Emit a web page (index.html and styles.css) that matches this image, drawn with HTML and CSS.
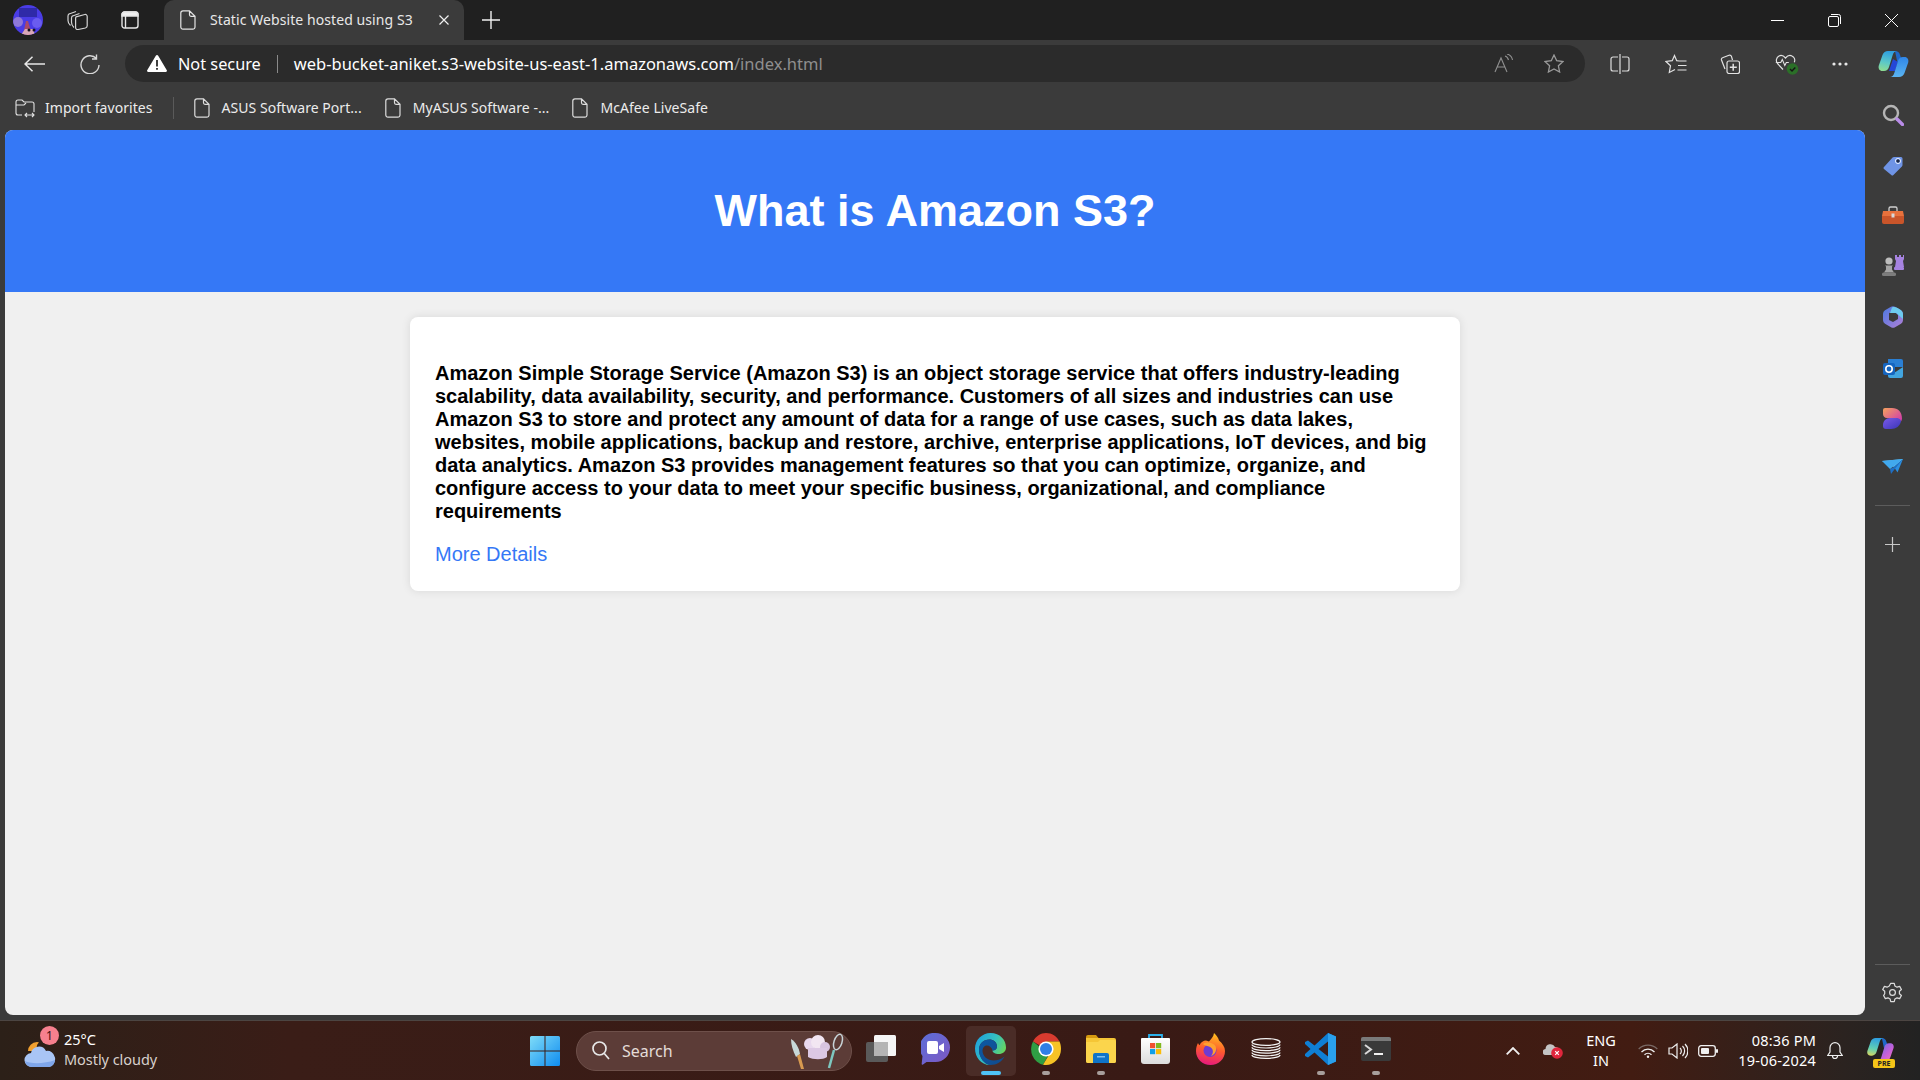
FILE: index.html
```html
<!DOCTYPE html>
<html lang="en">
  <head>
    <meta charset="UTF-8" />
    <meta name="viewport" content="width=device-width, initial-scale=1.0" />
    <title>Static Website hosted using S3</title>
    <link rel="stylesheet" href="styles.css">
  </head>
  <body>
    <!-- title bar -->
    <div class="titlebar">
      <svg class="avatar" width="30" height="30" viewBox="0 0 30 30">
        <defs><clipPath id="avClip"><circle cx="15" cy="15" r="15"/></clipPath></defs>
        <g clip-path="url(#avClip)">
          <rect width="30" height="30" fill="#4a3ce6"/>
          <rect x="6" y="3" width="18" height="9" fill="#2f2aa8"/>
          <circle cx="5" cy="17" r="5" fill="#8f78d8"/>
          <circle cx="24" cy="18" r="5" fill="#6a5cf0"/>
          <path d="M10 30l3-14 2 0 4 14z" fill="#a84a6a"/>
          <path d="M8 30l4-6h8l2 6z" fill="#d8a8b8"/>
          <circle cx="16" cy="25" r="1.5" fill="#15121f"/>
          <circle cx="21" cy="25" r="1.5" fill="#15121f"/>
        </g>
      </svg>
      <svg class="ws-icon" width="21" height="20" viewBox="0 0 21 20" fill="none" stroke="#d4d4d4" stroke-width="1.2">
        <path d="M3.5 15.5C1.8 14 1 12.5 1 10.5V6c0-1.2.7-2 1.800-2.300L9 1.500"/>
        <path d="M7 17.500C5.300 16 4.500 14.500 4.500 12.500V8c0-1.200.7-2 1.800-2.300L12.500 3.500"/>
        <path d="M9 6.800l8.800-2.300c1.300-.3 2.400.6 2.400 2v9.200c0 1.200-.7 2-1.800 2.300L11 19.500c-1.300.3-2.400-.6-2.400-2V8.500c0-.8.100-1.400.400-1.700z"/>
      </svg>
      <svg class="vt-icon" width="18" height="18" viewBox="0 0 18 18" fill="none" stroke="#e6e6e6" stroke-width="1.4">
        <path d="M1 5V3.500A2.500 2.500 0 0 1 3.500 1h11A2.500 2.500 0 0 1 17 3.500V5z" fill="#f0f0f0"/>
        <rect x="1" y="1" width="16" height="16" rx="2.5"/>
        <path d="M4.500 5v12" />
      </svg>
      <div class="tab">
        <svg width="16" height="20" viewBox="0 0 16 20" fill="none" stroke="#e4e4e4" stroke-width="1.2"><path d="M3 .8h6.500L15 6.300V17a2.200 2.200 0 0 1-2.200 2.200H3A2.200 2.200 0 0 1 .8 17V3A2.200 2.200 0 0 1 3 .8zM9.500.8v4a1.500 1.500 0 0 0 1.500 1.500h4"/></svg>
        <span class="tab-title">Static Website hosted using S3</span>
        <svg class="tab-close" width="10" height="10" viewBox="0 0 10 10" stroke="#f0f0f0" stroke-width="1.2"><path d="M.5.5l9 9M9.5.5l-9 9"/></svg>
      </div>
      <svg class="new-tab" width="18" height="18" viewBox="0 0 18 18" stroke="#f0f0f0" stroke-width="1.4"><path d="M9 0v18M0 9h18"/></svg>
      <div class="win-controls">
        <svg width="13" height="13" viewBox="0 0 13 13" stroke="#ffffff"><path d="M0 6.500h13"/></svg>
        <svg width="13" height="13" viewBox="0 0 13 13" fill="none" stroke="#ffffff"><rect x=".5" y="2.5" width="10" height="10" rx="1.5"/><path d="M3 .5h7.500a2 2 0 0 1 2 2V10"/></svg>
        <svg width="13" height="13" viewBox="0 0 13 13" stroke="#ffffff"><path d="M0 0l13 13M13 0L0 13"/></svg>
      </div>
    </div>

    <!-- address bar row -->
    <div class="toolbar">
      <svg class="back" width="21" height="16" viewBox="0 0 21 16" fill="none" stroke="#e8e8e8" stroke-width="1.5"><path d="M21 8H1M8.500.7L1 8l7.500 7.300"/></svg>
      <svg class="reload" width="20" height="20" viewBox="0 0 20 20" fill="none" stroke="#d8d8d8" stroke-width="1.4"><path d="M16.500 4.500A9 9 0 1 0 19 11M16.500 .5v4.500H12"/></svg>
      <div class="address">
        <svg class="warn" width="20" height="17" viewBox="0 0 20 17"><path d="M10 0c.5 0 .9.3 1.200.7l8.600 14.500c.5.800-.1 1.800-1 1.800H1.200c-.9 0-1.500-1-1-1.800L8.800.7C9.100.3 9.500 0 10 0z" fill="#ffffff"/><path d="M9.100 5h1.800v6.500H9.100zM9.100 13h1.800v1.800H9.100z" fill="#2b2b2b"/></svg>
        <span class="not-secure">Not secure</span>
        <span class="addr-sep"></span>
        <span class="url">web-bucket-aniket.s3-website-us-east-1.amazonaws.com<span class="url-path">/index.html</span></span>
        <div class="addr-icons">
          <svg width="20" height="19" viewBox="0 0 20 19" fill="none" stroke="#8f8f8f" stroke-width="1.1"><path d="M1 18L7 4l6 14M3 13h8"/><path d="M11 2c2 .5 3 2 3.500 4M13 0c2.800.7 5 3 5.500 6"/></svg>
          <svg width="20" height="19" viewBox="0 0 20 19" fill="none" stroke="#9a9a9a" stroke-width="1.3"><path d="M10 1l2.700 5.700 6.300.8-4.600 4.300 1.200 6.200L10 15l-5.600 3 1.200-6.200L1 7.500l6.300-.8z"/></svg>
        </div>
      </div>
      <div class="tool-icons">
        <svg width="20" height="20" viewBox="0 0 20 20" fill="none" stroke="#dcdcdc" stroke-width="1.2"><path d="M8 3H3a2 2 0 0 0-2 2v10a2 2 0 0 0 2 2h5M12 3h5a2 2 0 0 1 2 2v10a2 2 0 0 1-2 2h-5M10 0v20"/></svg>
        <svg class="ti-fav" width="22" height="20" viewBox="0 0 22 20" fill="none" stroke="#e2e2e2" stroke-width="1.2"><path d="M14 7l-2.300-.3L9.500 1.500 7.200 6.700 1 7.500l4.500 4.200-1.200 6.800 5.700-3"/><path d="M14 7h7.500M13 11.500h8.500M12.500 16h9"/></svg>
        <svg class="ti-coll" width="20" height="20" viewBox="0 0 20 20" fill="none" stroke="#e2e2e2" stroke-width="1.2"><path d="M5 15L1.500 6c-.3-.9.1-1.900 1-2.200L9 1.200c1-.4 2 .1 2.400 1L12.500 6"/><rect x="7" y="7" width="12.5" height="12.5" rx="2"/><path d="M13.200 9.700v7M9.800 13.200h7" stroke-width="1.5"/></svg>
        <svg class="ti-health" width="24" height="22" viewBox="0 0 24 22" fill="none"><path d="M8 16.500l-5.500-6C.5 8 1.300 4.300 4 3s5 .2 6.500 2C12 3.200 14.500 1.700 17 3c2.500 1.200 3.300 4 2.300 6.300" stroke="#e2e2e2" stroke-width="1.2"/><path d="M.8 9.500h5l1.500-3 2.500 6 1.500-3h2.500" stroke="#e2e2e2" stroke-width="1.1"/><circle cx="17.5" cy="16" r="5.8" fill="#2b6f28"/><path d="M15 16l2 2 3.300-3.500" stroke="#141414" stroke-width="1.4"/></svg>
        <svg class="ti-dots" width="16" height="4" viewBox="0 0 16 4" fill="#e8e8e8"><circle cx="2" cy="2" r="1.6"/><circle cx="8" cy="2" r="1.6"/><circle cx="14" cy="2" r="1.6"/></svg>
        <svg class="ti-copilot" width="31" height="27" viewBox="0 0 31 27">
          <defs>
            <linearGradient id="cpA" x1="0.4" y1="0" x2="0.2" y2="1"><stop offset="0" stop-color="#2f9fe0"/><stop offset=".55" stop-color="#5cc8c8"/><stop offset="1" stop-color="#90dd90"/></linearGradient>
            <linearGradient id="cpB" x1="0.5" y1="0" x2="0.5" y2="1"><stop offset="0" stop-color="#2f86e8"/><stop offset="1" stop-color="#5ab4f2"/></linearGradient>
          </defs>
          <path d="M17 1c2.500 0 4.500 1.500 5 4l1.500 4-4 4z" fill="#2068c8"/>
          <path d="M11 21h6l3-9-5-3z" fill="#2447d8"/>
          <path d="M10 1h9c-2 0-3.500 1.500-4.300 4L11 17c-.8 2.500-2.500 4-5 4H4.500C1.500 21 0 18.500.8 15.500L4.500 5C5.500 2.500 7.500 1 10 1z" fill="url(#cpA)"/>
          <path d="M21 27h-9c2 0 3.500-1.500 4.300-4L20 11c.8-2.500 2.500-4 5-4h1.500c3 0 4.500 2.500 3.700 5.500L26.500 23c-1 2.500-3 4-5.500 4z" fill="url(#cpB)"/>
        </svg>
      </div>
    </div>

    <div class="content">
      <div class="content-left">
        <!-- favorites row -->
        <div class="favorites">
          <svg width="20" height="20" viewBox="0 0 20 20" fill="none" stroke="#e2e2e2" stroke-width="1.1"><path d="M7 17H3a2 2 0 0 1-2-2V4a2 2 0 0 1 2-2h4l2 2h8a2 2 0 0 1 2 2v8"/><path d="M1 7h8l2-2"/><path d="M10 17h9M12 15l-2 2 2 2M17 15l2 2-2 2"/></svg>
          <span class="fav-label fav-import">Import favorites</span>
          <span class="fav-sep"></span>
          <svg class="fav-doc fav-doc-first" width="16" height="20" viewBox="0 0 16 20" fill="none" stroke="#dcdcdc" stroke-width="1.2"><path d="M3 .8h6.500L15 6.300V17a2.200 2.200 0 0 1-2.200 2.200H3A2.200 2.200 0 0 1 .8 17V3A2.200 2.200 0 0 1 3 .8zM9.500.8v4a1.500 1.500 0 0 0 1.500 1.500h4"/></svg>
          <span class="fav-label">ASUS Software Port...</span>
          <svg class="fav-doc" width="16" height="20" viewBox="0 0 16 20" fill="none" stroke="#dcdcdc" stroke-width="1.2"><path d="M3 .8h6.500L15 6.300V17a2.200 2.200 0 0 1-2.200 2.200H3A2.200 2.200 0 0 1 .8 17V3A2.200 2.200 0 0 1 3 .8zM9.500.8v4a1.500 1.500 0 0 0 1.500 1.500h4"/></svg>
          <span class="fav-label">MyASUS Software -...</span>
          <svg class="fav-doc" width="16" height="20" viewBox="0 0 16 20" fill="none" stroke="#dcdcdc" stroke-width="1.2"><path d="M3 .8h6.500L15 6.300V17a2.200 2.200 0 0 1-2.200 2.200H3A2.200 2.200 0 0 1 .8 17V3A2.200 2.200 0 0 1 3 .8zM9.500.8v4a1.500 1.500 0 0 0 1.500 1.500h4"/></svg>
          <span class="fav-label">McAfee LiveSafe</span>
        </div>

        <!-- the web page itself -->
        <div class="page">
          <header class="page-header">
            <h1>What is Amazon S3?</h1>
          </header>
          <div class="card">
            <p class="card-text">Amazon Simple Storage Service (Amazon S3) is an object storage service that offers industry-leading scalability, data availability, security, and performance. Customers of all sizes and industries can use Amazon S3 to store and protect any amount of data for a range of use cases, such as data lakes, websites, mobile applications, backup and restore, archive, enterprise applications, IoT devices, and big data analytics. Amazon S3 provides management features so that you can optimize, organize, and configure access to your data to meet your specific business, organizational, and compliance requirements</p>
            <a class="card-link" href="#">More Details</a>
          </div>
        </div>
      </div>

      <!-- edge sidebar -->
      <div class="sidebar">
        <svg width="22" height="22" viewBox="0 0 22 22" fill="none"><circle cx="9" cy="9" r="7" stroke="#b5b5b5" stroke-width="2.4"/><path d="M15 15l5.500 5.500" stroke="#b98ce8" stroke-width="3.4" stroke-linecap="round"/></svg>
        <svg width="20" height="20" viewBox="0 0 20 20"><path d="M11 1h7a1.500 1.500 0 0 1 1.500 1.500V9a2 2 0 0 1-.6 1.400l-8.500 8.500a1.500 1.500 0 0 1-2.100 0L1 13a1.500 1.500 0 0 1 0-2.100l8.600-9.300A2 2 0 0 1 11 1z" fill="#6f94e6"/><circle cx="15" cy="5" r="1.8" fill="#1f2a44"/><circle cx="15" cy="5" r="2.6" fill="none" stroke="#dfe8fb"/></svg>
        <svg width="22" height="18" viewBox="0 0 22 18"><path d="M7 5V2.500A1.500 1.500 0 0 1 8.500 1h5A1.500 1.500 0 0 1 15 2.500V5" fill="none" stroke="#cfcfcf" stroke-width="1.3"/><path d="M1 5h20l1 5H0z" fill="#e8713c"/><path d="M0 10h22v6a2 2 0 0 1-2 2H2a2 2 0 0 1-2-2z" fill="#c9552a"/><rect x="9.5" y="7.5" width="3" height="4" fill="#d8d8d8"/></svg>
        <svg width="22" height="22" viewBox="0 0 22 22"><path d="M13 13l1-6-1-2V1h2v2h2V1h2v2h2V1h1v4l-1 2 1 6z" fill="#a683e0"/><rect x="12" y="13" width="10" height="3" rx="1" fill="#a683e0"/><circle cx="7" cy="7" r="3.6" fill="#bdbdbd"/><path d="M3 11.500h8l-1 1v3l2 3H2l2-3v-3z" fill="#a5a5a5"/><rect y="18.5" width="14" height="3.5" rx="1.5" fill="#7d7d7d"/></svg>
        <svg width="20" height="22" viewBox="0 0 20 22"><defs><linearGradient id="m3A" x1="0" y1="0" x2="1" y2="1"><stop offset="0" stop-color="#4a78e0"/><stop offset="1" stop-color="#b080d8"/></linearGradient></defs><path d="M8 .8a4 4 0 0 1 4 0l6 3.500a4 4 0 0 1 2 3.400v6.600a4 4 0 0 1-2 3.400l-6 3.500a4 4 0 0 1-4 0l-6-3.500a4 4 0 0 1-2-3.400V7.700a4 4 0 0 1 2-3.400z" fill="url(#m3A)"/><path d="M6 7l6-1 3 3 0 4-5 3-4-2z" fill="#3b3b3b"/><path d="M9 1.500c3-1 5 0 8 2 2 1 3 3 3 5V13l-4-3.500c-1-1-2-2.500-3.500-2.500H7z" fill="#6dcbef"/></svg>
        <svg width="20" height="20" viewBox="0 0 20 20"><path d="M5 1h13a2 2 0 0 1 2 2v6H5z" fill="#2a7fd4"/><path d="M5 9l7.500 5L20 9v9a2 2 0 0 1-2 2H7a2 2 0 0 1-2-2z" fill="#42a5e0"/><rect y="5" width="12" height="12" rx="2" fill="#1565c0"/><circle cx="6" cy="11" r="3.2" fill="none" stroke="#ffffff" stroke-width="1.6"/></svg>
        <svg width="19" height="21" viewBox="0 0 19 21"><defs><linearGradient id="desA" x1="0" y1="0" x2="1" y2="0.8"><stop offset="0" stop-color="#f5a25d"/><stop offset="1" stop-color="#d23fa8"/></linearGradient><linearGradient id="desB" x1="0" y1="0" x2="1" y2="1"><stop offset="0" stop-color="#7a5ae8"/><stop offset="1" stop-color="#3a35b8"/></linearGradient></defs><path d="M2 0h7c6 0 10 4 10 10.500 0 1-.3 2-1 3-1.500-2.500-4-3.500-7-3.500H4c-2.500 0-4-1.700-4-4V2a2 2 0 0 1 2-2z" fill="url(#desA)"/><path d="M7 10h6c3 0 5 1.500 5 3.500C17 18 13 21 8 21H3a3 3 0 0 1-3-3v-1c0-4 3-7 7-7z" fill="url(#desB)"/></svg>
        <svg width="21" height="15" viewBox="0 0 21 15"><path d="M0 2l21-2-9 8z" fill="#60c0f5"/><path d="M21 0l-9 8 3.500 5.500z" fill="#2c8fe0"/><path d="M21 0L12 8l-4 2 1 5 3-4z" fill="#1f6fc4"/><path d="M0 2l8 8 13-10z" fill="#41a9ee"/></svg>
        <div class="side-divider"></div>
        <svg width="15" height="15" viewBox="0 0 15 15" stroke="#c8c8c8" stroke-width="1.2"><path d="M7.500 0v15M0 7.500h15"/></svg>
        <div class="side-bottom">
          <div class="side-divider"></div>
          <svg width="21" height="21" viewBox="0 0 24 24" fill="none" stroke="#dcdcdc" stroke-width="1.4"><circle cx="12" cy="12" r="3.3"/><path d="M10 1.500h4l.7 3 2.500 1.400 3-.9 2 3.500-2.300 2.100v2.800l2.300 2.100-2 3.500-3-.9-2.500 1.400-.7 3h-4l-.7-3-2.500-1.400-3 .9-2-3.500L3.100 13.400v-2.800L.8 8.500l2-3.500 3 .9 2.500-1.400z" stroke-linejoin="round"/></svg>
        </div>
      </div>
    </div>

    <!-- windows taskbar -->
    <div class="taskbar">
      <div class="weather">
        <div class="weather-icon">
          <svg width="32" height="34" viewBox="0 0 32 34"><path d="M4 17a9 9 0 0 1 9-9c1 0 1.500.2 2 .5-3 2-3 7 0 8.500z" fill="#f0a030"/><path d="M8 33a7 7 0 0 1-1-14 8 8 0 0 1 15-2 7.500 8 0 0 1 3 16z" fill="#a9c5f5"/><path d="M8 33a7 7 0 0 1-7-6c5 3 20 3 30-1a7 7 0 0 1-6 7z" fill="#7fa6ea"/></svg>
          <span class="weather-badge">1</span>
        </div>
        <div class="weather-text">
          <span class="weather-temp">25°C</span>
          <span class="weather-desc">Mostly cloudy</span>
        </div>
      </div>

      <div class="task-center">
        <svg class="win-logo" width="30" height="30" viewBox="0 0 30 30"><defs><linearGradient id="winA" x1="0" y1="0" x2="1" y2="1"><stop offset="0" stop-color="#7fdcf8"/><stop offset="1" stop-color="#0f8cf0"/></linearGradient></defs><path d="M0 1.500A1.500 1.500 0 0 1 1.500 0h13v14.500H0zM15.500 0h13A1.500 1.500 0 0 1 30 1.500v13H15.500zM0 15.500h14.500V30h-13A1.500 1.500 0 0 1 0 28.500zM15.500 15.500H30v13a1.500 1.500 0 0 1-1.500 1.500h-13z" fill="url(#winA)"/></svg>
        <div class="search">
          <svg width="18" height="19" viewBox="0 0 18 19" fill="none" stroke="#e8e8e8" stroke-width="1.7"><circle cx="7.5" cy="7.5" r="6.5"/><path d="M12.300 12.500L17 18"/></svg>
          <span class="search-label">Search</span>
          <svg class="search-art" width="54" height="36" viewBox="0 0 54 36">
            <path d="M1 6c5 3 8 9 9 15l-4 3C3 18 1 12 1 6z" fill="#c8d8d8"/><path d="M7 23l3-2 4 15-3 0z" fill="#d89a50"/>
            <circle cx="20" cy="11" r="6" fill="#e8d8ee"/><circle cx="28" cy="9" r="7" fill="#f2e6f2"/><circle cx="35" cy="14" r="5" fill="#d8c4e0"/><path d="M18 15h19v9c-4 3-14 3-19 0z" fill="#dcc8e4"/>
            <ellipse cx="48" cy="9" rx="4" ry="8" transform="rotate(18 48 9)" fill="none" stroke="#c8d4d8" stroke-width="1.5"/><path d="M44 17l-5 18" stroke="#7ec8c0" stroke-width="2.5"/>
          </svg>
        </div>
        <div class="task-icons">
          <div class="task-item">
            <svg width="30" height="27" viewBox="0 0 30 27"><rect y="7" width="22" height="20" rx="2" fill="#5a5a5a"/><rect x="8" width="22" height="21" rx="1.5" fill="#f5f5f5"/><rect x="8" y="7" width="14" height="14" fill="#b4b4b4"/></svg>
          </div>
          <div class="task-item">
            <svg width="29" height="32" viewBox="0 0 29 32"><defs><linearGradient id="chatA" x1="0" y1="0" x2="1" y2="1"><stop offset="0" stop-color="#5b6fd8"/><stop offset="1" stop-color="#7e57c2"/></linearGradient></defs><path d="M14.500 0a14.500 14.500 0 0 1 0 29H5.500L2 31.500c-.8.500-1.500 0-1.300-.9l.8-7.600A14.500 14.500 0 0 1 14.500 0z" fill="url(#chatA)"/><rect x="6" y="8" width="11" height="13" rx="2" fill="#ffffff"/><path d="M18 13l5-3v9l-5-3z" fill="#ffffff"/></svg>
          </div>
          <div class="task-item task-active">
            <svg width="31" height="32" viewBox="0 0 31 32">
              <defs><linearGradient id="edgeA" x1="0" y1="0" x2="1" y2=".5"><stop offset="0" stop-color="#1b9de2"/><stop offset=".6" stop-color="#35c1c0"/><stop offset="1" stop-color="#6ad65a"/></linearGradient><linearGradient id="edgeB" x1="0" y1="0" x2="1" y2="1"><stop offset="0" stop-color="#0c59a4"/><stop offset="1" stop-color="#114a8b"/></linearGradient></defs>
              <path d="M15.500 0C25 0 31 7 31 14.500c0 4-3 6.500-7.500 6.500-3 0-6-1.500-6-3.500 2.500 0 4.500-1.500 4.500-4C22 9 18 6.500 14.500 6.500 8 6.500 4 11 4 17c0 7 5 13 11 15C6 32 0 24 0 15.500 0 7 7 0 15.500 0z" fill="url(#edgeA)"/>
              <path d="M4 17c0-6 4-10.500 10.500-10.500 3.500 0 7.500 2.500 7.500 7 0 2.500-2 4-4.500 4-.5-3-3-5-5.500-5-3 0-4.500 2.500-4.500 5.500 0 5 5 9.500 11 9.500 4 0 8-1.500 11-4-2.500 5-8 8.500-14 8.500C9 32 4 24 4 17z" fill="url(#edgeB)"/>
            </svg>
            <span class="task-pill"></span>
          </div>
          <div class="task-item">
            <svg width="30" height="32" viewBox="0 0 30 32">
              <path d="M15 16L2 8.500C5 3 9.500 0 15 0c5.800 0 11 3.300 13.500 8.500H15z" fill="#d93b2f"/>
              <path d="M2 8.500A15.500 16 0 0 0 12 31.700L18 21z" fill="#2f9e44"/>
              <path d="M28.500 8.500H15l5 10L12 31.700c1 .2 2 .3 3 .3 8.300 0 15-7.200 15-16 0-2.600-.5-5.300-1.500-7.500z" fill="#f7c325"/>
              <circle cx="15" cy="16" r="7.6" fill="#ffffff"/><circle cx="15" cy="16" r="6" fill="#2f7fe6"/>
            </svg>
            <span class="task-dot"></span>
          </div>
          <div class="task-item">
            <svg width="30" height="28" viewBox="0 0 30 28"><path d="M0 2a2 2 0 0 1 2-2h8l3 3.500h-13z" fill="#d69a10"/><path d="M0 3h28a2 2 0 0 1 2 2v21a2 2 0 0 1-2 2H2a2 2 0 0 1-2-2z" fill="#f5c636"/><path d="M0 7h12l2-2h14a2 2 0 0 1 2 2v19a2 2 0 0 1-2 2H2a2 2 0 0 1-2-2z" fill="#fbd54c"/><path d="M7 20a2 2 0 0 1 2-2h12a2 2 0 0 1 2 2v8H7z" fill="#0f74c8"/><rect x="11" y="21" width="8" height="1.5" fill="#7ec0ee"/></svg>
            <span class="task-dot"></span>
          </div>
          <div class="task-item">
            <svg width="29" height="31" viewBox="0 0 29 31"><defs><linearGradient id="bagA" x1="0" y1="0" x2="0" y2="1"><stop offset="0" stop-color="#ffffff"/><stop offset="1" stop-color="#dcdcdc"/></linearGradient></defs><path d="M8 6V2h13v4" fill="none" stroke="#2cb0ea" stroke-width="1.8"/><path d="M1 5h27a1 1 0 0 1 1 1v22a3 3 0 0 1-3 3H3a3 3 0 0 1-3-3V6a1 1 0 0 1 1-1z" fill="url(#bagA)"/><rect x="9" y="10" width="5.2" height="5.2" fill="#f05030"/><rect x="15" y="10" width="5.2" height="5.2" fill="#80b820"/><rect x="9" y="16" width="5.2" height="5.2" fill="#10a0e8"/><rect x="15" y="16" width="5.2" height="5.2" fill="#fbbc09"/></svg>
          </div>
          <div class="task-item">
            <svg width="29" height="32" viewBox="0 0 29 32">
              <defs><linearGradient id="ffA" x1="0.6" y1="0" x2=".4" y2="1"><stop offset="0" stop-color="#ffc21e"/><stop offset=".5" stop-color="#ff5b2e"/><stop offset="1" stop-color="#e5197e"/></linearGradient></defs>
              <path d="M14.500 32C6.500 32 0 26 0 18c0-3 .8-6 2-8 .3 1 .8 1.800 1.500 2.200C5 9 7.500 7.500 10 7.500c1 .3 2 .5 3 1C15 6 17.500 4 18 0c3 3 4.500 5 5 7.500 3.500 3 6 6.500 6 10.500 0 8-6.500 14-14.500 14z" fill="url(#ffA)"/>
              <circle cx="14" cy="17.5" r="6.5" fill="#6f3bd0"/>
              <path d="M7 11c4-2.500 10-1.500 12.500 2 1.500 4 0 8.500-4.500 10 3-3 2.500-8-2-9.500-2.500-.8-4.500-.8-6-2.500z" fill="#ffa030"/>
            </svg>
          </div>
          <div class="task-item">
            <svg width="30" height="21" viewBox="0 0 30 21" fill="none" stroke="#f4f4f4" stroke-width="1.2"><ellipse cx="15" cy="4" rx="14" ry="3.4"/><path d="M1 6.600a14 3.400 0 0 0 28 0M1 9.200a14 3.400 0 0 0 28 0M1 11.800a14 3.400 0 0 0 28 0M1 14.400a14 3.400 0 0 0 28 0M1 17a14 3.400 0 0 0 28 0"/></svg>
          </div>
          <div class="task-item">
            <svg width="31" height="32" viewBox="0 0 31 32"><path d="M23 0l8 3.500v25L23 32 9.500 19.500 3 24.500 0 23v-2l5.500-5L0 11V9l3-1.500 6.500 5z" fill="#0f7fd4"/><path d="M23 8.500L13.500 16l9.500 7.500z" fill="#3a1c16"/><path d="M23 0l8 3.500v25L23 32z" fill="#2aa0ec"/></svg>
            <span class="task-dot"></span>
          </div>
          <div class="task-item">
            <svg width="30" height="24" viewBox="0 0 30 24"><rect width="30" height="24" rx="2" fill="#3a3a3a"/><path d="M0 2a2 2 0 0 1 2-2h26a2 2 0 0 1 2 2v2H0z" fill="#7a7a7a"/><path d="M4 8l6 4.500-6 4.500" fill="none" stroke="#d8d8d8" stroke-width="2"/><rect x="13" y="16" width="9" height="2" fill="#f0f0f0"/></svg>
            <span class="task-dot"></span>
          </div>
        </div>
      </div>

      <div class="tray">
        <svg class="tray-chevron" width="14" height="8" viewBox="0 0 14 8" fill="none" stroke="#f0f0f0" stroke-width="1.8"><path d="M.7 7.300L7 1l6.300 6.300"/></svg>
        <svg class="tray-drive" width="20" height="17" viewBox="0 0 20 17"><path d="M3 13a3 3 0 0 1-.5-6A5 5 0 0 1 12 5a3.500 3.500 0 0 1 4 4l-1 4z" fill="#c4c4c4"/><circle cx="14" cy="11" r="5.8" fill="#e0263c"/><path d="M12.200 9.200l3.600 3.600M15.800 9.200l-3.600 3.600" stroke="#ffffff" stroke-width="1.2"/></svg>
        <div class="tray-lang">
          <span>ENG</span>
          <span>IN</span>
        </div>
        <svg class="tray-wifi" width="20" height="14" viewBox="0 0 20 14" fill="none" stroke-width="1.3"><path d="M.7 5a13 13 0 0 1 18.600 0" stroke="#7a6a66"/><path d="M3.500 8a9 9 0 0 1 13 0" stroke="#f0f0f0"/><path d="M6.500 10.800a5 5 0 0 1 7 0" stroke="#f0f0f0"/><circle cx="10" cy="12.8" r="1.2" fill="#f0f0f0" stroke="none"/></svg>
        <svg class="tray-vol" width="20" height="16" viewBox="0 0 20 16" fill="none" stroke="#f0f0f0" stroke-width="1.2"><path d="M1 5h3l5-4v14l-5-4H1zM12 5a4 4 0 0 1 0 6M14.500 3a7 7 0 0 1 0 10M17 1a10 10 0 0 1 0 14"/></svg>
        <svg class="tray-batt" width="20" height="12" viewBox="0 0 20 12"><rect x=".7" y=".7" width="16.6" height="10.6" rx="2.5" fill="none" stroke="#f0f0f0" stroke-width="1.3"/><rect x="3" y="3" width="8" height="6" rx="1" fill="#f0f0f0"/><rect x="18" y="4" width="2" height="4" rx="1" fill="#f0f0f0"/></svg>
        <div class="tray-clock">
          <span>08:36 PM</span>
          <span>19-06-2024</span>
        </div>
        <svg class="tray-bell" width="16" height="18" viewBox="0 0 16 18" fill="none" stroke="#f0f0f0" stroke-width="1.2"><path d="M8 .7a5 5 0 0 1 5 5V10l2.300 3.500H.7L3 10V5.700a5 5 0 0 1 5-5zM5.500 14a2.500 2.500 0 0 0 5 0"/></svg>
        <div class="tray-copilot">
          <svg width="29" height="24" viewBox="0 0 31 27">
            <defs>
              <linearGradient id="cpC" x1=".4" y1="0" x2=".2" y2="1"><stop offset="0" stop-color="#2f9fe0"/><stop offset=".6" stop-color="#62d0b4"/><stop offset="1" stop-color="#d8d860"/></linearGradient>
              <linearGradient id="cpD" x1="0" y1="0" x2="1" y2="1"><stop offset="0" stop-color="#5a70e8"/><stop offset=".6" stop-color="#c860d8"/><stop offset="1" stop-color="#f07ab0"/></linearGradient>
            </defs>
            <path d="M17 1c2.500 0 4.500 1.500 5 4l1.500 4-4 4z" fill="#2068c8"/>
            <path d="M10 1h9c-2 0-3.500 1.500-4.300 4L11 17c-.8 2.500-2.500 4-5 4H4.500C1.500 21 0 18.500.8 15.500L4.500 5C5.500 2.500 7.500 1 10 1z" fill="url(#cpC)"/>
            <path d="M21 27h-9c2 0 3.500-1.500 4.300-4L20 11c.8-2.500 2.500-4 5-4h1.500c3 0 4.500 2.500 3.700 5.500L26.500 23c-1 2.500-3 4-5.500 4z" fill="url(#cpD)"/>
          </svg>
          <span class="pre-badge">PRE</span>
        </div>
      </div>
    </div>
  </body>
</html>
```

FILE: styles.css
```css
* {
  box-sizing: border-box;
}
body {
  margin: 0;
  width: 1920px;
  height: 1080px;
  overflow: hidden;
  display: flex;
  flex-direction: column;
  background-color: #3b3b3b;
  font-family: "Noto Sans", "Open Sans", sans-serif;
  color: #ffffff;
}
svg {
  display: block;
  flex-shrink: 0;
}

/* title bar */
.titlebar {
  height: 40px;
  background-color: #202020;
  display: flex;
  align-items: center;
  padding-left: 13px;
}
.ws-icon {
  margin-left: 24px;
}
.vt-icon {
  margin-left: 33px;
}
.tab {
  width: 300px;
  height: 40px;
  margin-left: 25px;
  background-color: #3b3b3b;
  border-radius: 10px 10px 0 0;
  display: flex;
  align-items: center;
  padding-left: 16px;
  padding-bottom: 1px;
}
.tab-title {
  margin-left: 14px;
  width: 229px;
  font-size: 14px;
  letter-spacing: 0.08px;
  color: #e8e8e8;
  white-space: nowrap;
}
.new-tab {
  margin-left: 18px;
}
.win-controls {
  margin-left: auto;
  display: flex;
  gap: 44px;
  padding-right: 22px;
}

/* address bar row */
.toolbar {
  height: 47px;
  flex-shrink: 0;
  display: flex;
  align-items: center;
  padding: 5px 0 5px 24px;
}
.reload {
  margin-left: 35px;
}
.address {
  width: 1460px;
  height: 37px;
  margin-left: 25px;
  background-color: #2b2b2b;
  border-radius: 19px;
  display: flex;
  align-items: center;
  padding-left: 22px;
}
.not-secure {
  margin-left: 11px;
  font-size: 16.3px;
  color: #ffffff;
}
.addr-sep {
  width: 1px;
  height: 18px;
  margin-left: 16px;
  margin-right: 16px;
  background-color: #8a8a8a;
}
.url {
  font-size: 16.5px;
  color: #ffffff;
  white-space: nowrap;
}
.url-path {
  color: #8f8f8f;
}
.addr-icons {
  margin-left: auto;
  display: flex;
  align-items: center;
  gap: 30px;
  padding-right: 21px;
}
.tool-icons {
  margin-left: 25px;
  display: flex;
  align-items: center;
}
.ti-fav {
  margin-left: 35px;
}
.ti-coll {
  margin-left: 33px;
}
.ti-health {
  margin-left: 35px;
}
.ti-dots {
  margin-left: 33px;
}
.ti-copilot {
  margin-left: 30px;
}

/* favorites row + page on the left, sidebar on the right */
.content {
  flex: 1;
  display: flex;
  min-height: 0;
}
.content-left {
  width: 1865px;
  display: flex;
  flex-direction: column;
  padding: 0 0 5px 5px;
}
.favorites {
  height: 43px;
  flex-shrink: 0;
  display: flex;
  align-items: center;
  margin-left: -5px;
  padding-left: 15px;
  padding-bottom: 2px;
  font-size: 14px;
}
.fav-label {
  margin-left: 12px;
  letter-spacing: 0.05px;
  color: #ececec;
  white-space: nowrap;
}
.fav-import {
  margin-left: 10px;
}
.fav-sep {
  width: 1px;
  height: 22px;
  margin-left: 20px;
  background-color: #5a5a5a;
}
.fav-doc {
  margin-left: 23px;
}
.fav-doc-first {
  margin-left: 20px;
}
.page {
  flex: 1;
  background-color: #f0f0f0;
  border-radius: 8px;
  overflow: hidden;
  font-family: "Liberation Sans", Arial, sans-serif;
}
.page-header {
  background-color: #3578f6;
  color: #ffffff;
  text-align: center;
  padding: 25px;
}
.page-header h1 {
  margin: 30px 0;
  font-size: 45px;
}
.card {
  width: 1050px;
  margin: 25px auto 0;
  padding: 25px;
  background-color: #ffffff;
  border-radius: 8px;
  box-shadow: 0 0 10px rgba(0, 0, 0, 0.1);
  font-size: 20px;
  color: #000000;
}
.card-text {
  margin: 20px 0;
  font-weight: bold;
}
.card-link {
  color: #3578f6;
  text-decoration: none;
}

/* sidebar */
.sidebar {
  width: 55px;
  display: flex;
  flex-direction: column;
  align-items: center;
  gap: 30px;
  padding: 17px 0 17px;
}
.side-divider {
  width: 35px;
  height: 1px;
  flex-shrink: 0;
  margin-top: 1px;
  margin-bottom: 1px;
  background-color: #5c5c5c;
}
.side-bottom {
  margin-top: auto;
  display: flex;
  flex-direction: column;
  align-items: center;
  gap: 16px;
}

/* taskbar */
.taskbar {
  height: 60px;
  flex-shrink: 0;
  display: flex;
  align-items: center;
  position: relative;
  border-top: 1px solid #4c4542;
  background: linear-gradient(90deg, #2c2018 0%, #3a1d17 15%, #391a15 60%, #421c12 85%, #2b2320 96%, #222222 100%);
}
.weather {
  width: 530px;
  padding-left: 24px;
  display: flex;
  align-items: center;
  flex-shrink: 0;
}
.weather-icon {
  position: relative;
  width: 40px;
}
.weather-badge {
  position: absolute;
  top: -8px;
  left: 16px;
  width: 19px;
  height: 19px;
  border-radius: 50%;
  background-color: #f6808e;
  color: #3a1010;
  font-size: 12px;
  line-height: 19px;
  text-align: center;
}
.weather-text {
  display: flex;
  flex-direction: column;
  margin-top: -3px;
  font-size: 14.5px;
  line-height: 20px;
  letter-spacing: -0.05px;
}
.weather-desc {
  color: #d8d0cc;
}
.task-center {
  display: flex;
  align-items: center;
}
.search {
  width: 276px;
  height: 40px;
  margin-left: 16px;
  border-radius: 20px;
  background-color: #5c3c37;
  border: 1px solid #6e504a;
  display: flex;
  align-items: center;
  padding-left: 15px;
}
.search-label {
  margin-left: 12px;
  font-size: 16px;
  color: #e4dcd8;
}
.search-art {
  margin-left: auto;
  margin-right: 7px;
}
.task-icons {
  margin-left: 1px;
  display: flex;
}
.task-item {
  position: relative;
  width: 55px;
  height: 50px;
  display: flex;
  align-items: center;
  justify-content: center;
  border-radius: 5px;
  padding-bottom: 4px;
}
.task-active {
  width: 50px;
  margin: 0 2.5px;
  background-color: #4a2c27;
}
.task-pill {
  position: absolute;
  left: 15px;
  bottom: 1px;
  width: 20px;
  height: 4px;
  border-radius: 2px;
  background-color: #4fc3f7;
}
.task-dot {
  position: absolute;
  left: 24px;
  bottom: 1px;
  width: 8px;
  height: 4px;
  border-radius: 2px;
  background-color: #a89f9c;
}
.tray {
  position: absolute;
  right: 25px;
  top: 0;
  height: 59px;
  display: flex;
  align-items: center;
}
.tray-drive {
  margin-left: 23px;
}
.tray-lang {
  margin-left: 24px;
  margin-top: -2px;
  width: 28px;
  display: flex;
  flex-direction: column;
  align-items: center;
  font-size: 14.5px;
  line-height: 20px;
}
.tray-wifi {
  margin-left: 23px;
}
.tray-vol {
  margin-left: 10px;
}
.tray-batt {
  margin-left: 10px;
}
.tray-clock {
  width: 98px;
  display: flex;
  flex-direction: column;
  align-items: flex-end;
  margin-top: -2px;
  font-size: 14.5px;
  line-height: 20px;
  letter-spacing: 0.2px;
}
.tray-bell {
  margin-left: 11px;
}
.tray-copilot {
  position: relative;
  margin-left: 23px;
  width: 29px;
  height: 28px;
}
.pre-badge {
  position: absolute;
  left: 7px;
  bottom: -3px;
  width: 22px;
  height: 9px;
  border-radius: 2px;
  background-color: #f5c518;
  color: #222222;
  font-size: 7px;
  font-weight: 700;
  line-height: 9px;
  text-align: center;
}
```
